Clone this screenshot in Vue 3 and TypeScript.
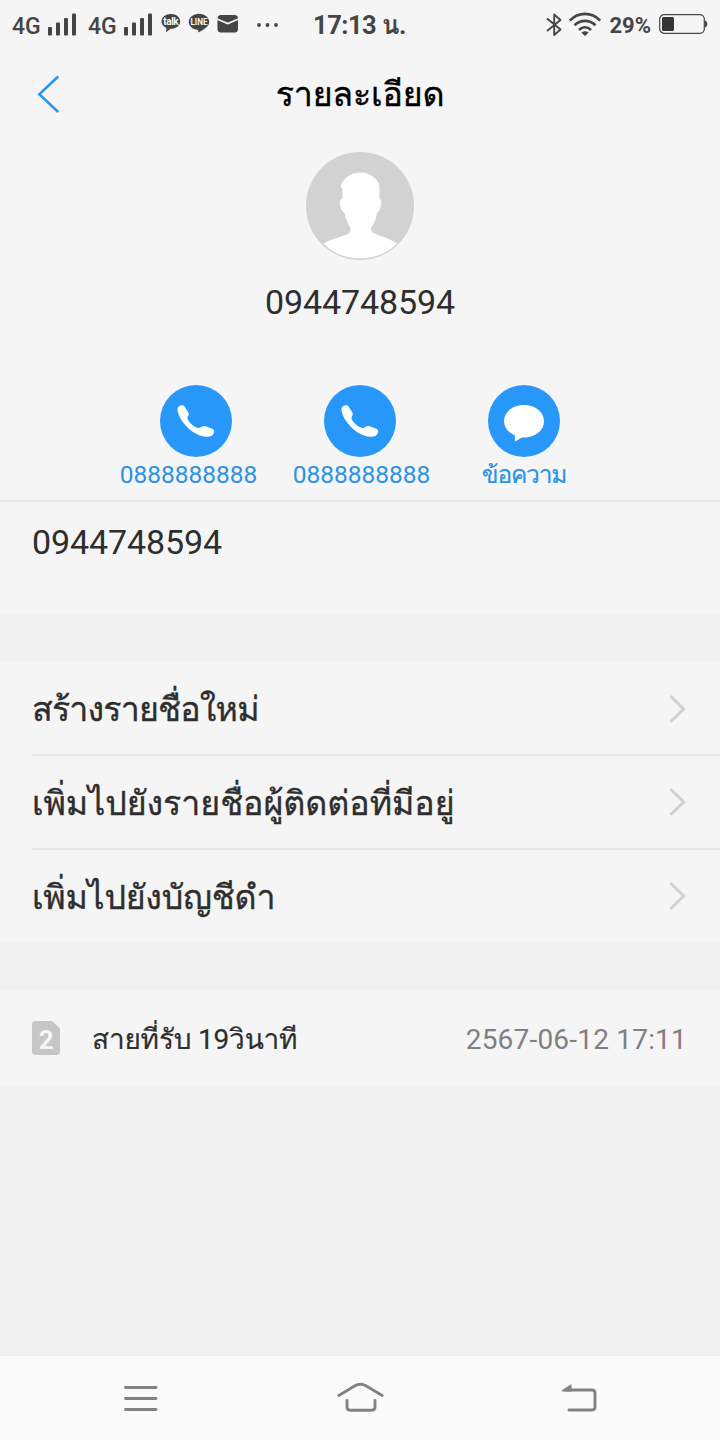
<script setup lang="ts">
interface Action {
  kind: 'call' | 'message'
  label: string
}

const phone = '0944748594'
const actions: Action[] = [
  { kind: 'call', label: '0888888888' },
  { kind: 'call', label: '0888888888' },
  { kind: 'message', label: 'ข้อความ' },
]
const options: { id: string; label: string }[] = [
  { id: 'create', label: 'สร้างรายชื่อใหม่' },
  { id: 'existing', label: 'เพิ่มไปยังรายชื่อผู้ติดต่อที่มีอยู่' },
  { id: 'block', label: 'เพิ่มไปยังบัญชีดำ' },
]
</script>

<template>
  <div class="screen">
    <div class="status">
      <template v-for="sim in 2" :key="sim">
        <span class="net">4G</span>
        <svg class="signal" width="29" height="24" viewBox="0 0 29 24" fill="#454545">
          <rect x="0" y="14" width="4" height="8.5" rx="1" />
          <rect x="8" y="9.500" width="4" height="13" rx="1" />
          <rect x="16" y="5" width="4" height="17.500" rx="1" />
          <rect x="24" y="0.500" width="4" height="22" rx="1" />
        </svg>
      </template>
      <svg class="talk" width="20" height="20" viewBox="0 0 20 20">
        <path d="M10 1C4.500 1 .5 4.200 .5 8.400c0 2.900 1.900 5.200 4.900 6.500L5 19.300l4.700-3.600c5.600 0 9.500-3.200 9.500-7.300S15.300 1 10 1z" fill="#454545" />
        <text x="2.300" y="12" class="talk-text">talk</text>
      </svg>
      <svg class="line-app" width="22" height="20" viewBox="0 0 22 20">
        <path d="M11 .8C5.200 .8 .8 4.400 .8 9c0 4.100 3.600 7.200 8.700 7.800 1.400.2.700 2 .9 2.700C15 17 21.200 13.500 21.200 9 21.200 4.400 16.800 .8 11 .8z" fill="#454545" />
        <text x="11" y="12.300" text-anchor="middle" textLength="17" lengthAdjust="spacingAndGlyphs" class="line-text">LINE</text>
      </svg>
      <svg class="mail" width="22" height="20" viewBox="0 0 22 20">
        <rect x="0.500" y="1" width="20.500" height="17.500" rx="3.500" fill="#454545" />
        <path d="M0 5l10.700 4.600L21.500 5" fill="none" stroke="#f5f5f5" stroke-width="1.600" />
      </svg>
      <svg class="dots" width="24" height="6" viewBox="0 0 24 6" fill="#454545">
        <circle cx="3" cy="3" r="1.900" /><circle cx="11.500" cy="3" r="1.900" /><circle cx="20" cy="3" r="1.900" />
      </svg>
      <span class="time">17:13 น.</span>
      <div class="status-right">
        <svg width="18" height="26" viewBox="0 0 18 26" fill="none" stroke="#454545" stroke-width="1.900">
          <path d="M1 6.500L14.500 17.500 8.200 23V2.500L14.500 8 1 19" stroke-linejoin="round" />
        </svg>
        <svg class="wifi" width="34" height="25" viewBox="0 0 34 25" fill="none" stroke="#454545" stroke-width="2.700">
          <path d="M1.800 8.600C10.500-.3 23.500-.3 32.200 8.600" />
          <path d="M6.500 13.300c6-5.900 15-5.900 21 0" />
          <path d="M11 17.900c3.600-3.300 8.400-3.300 12 0" />
          <path d="M13.500 20.700c1.600-2 5.400-2 7 0L17 24z" fill="#454545" stroke="none" />
        </svg>
        <span class="percent">29%</span>
        <svg class="battery" width="49" height="20" viewBox="0 0 49 20">
          <rect x="0.700" y="0.700" width="44.600" height="18.600" rx="4.500" fill="none" stroke="#454545" stroke-width="1.200" />
          <rect x="3" y="3" width="12" height="14" rx="1.500" fill="#353535" />
          <path d="M46 6.500c3 .8 3 6.200 0 7z" fill="#454545" />
        </svg>
      </div>
    </div>

    <header class="header">
      <svg class="back" width="24" height="40" viewBox="0 0 24 40" fill="none" stroke="#2e96ea" stroke-width="2.600">
        <path d="M22.200 1.500L3.300 19.300l18.900 17.700" />
      </svg>
      <h1 class="title">รายละเอียด</h1>
    </header>

    <section class="profile">
      <svg class="avatar" width="108" height="108" viewBox="0 0 108 108">
        <circle cx="54" cy="54" r="54" fill="#d2d2d2" />
        <path d="M54 20.500c-7 0-13 3.500-16.500 8.500-2 2.500-3 4.500-2.500 6l1.500 2v9.500c-3 1-3 4-2.500 6.500.7 4 2 6.500 4.500 8 1 6 3.500 10.500 5.500 14 .8 3 .2 5.500-2 7-8 3.500-17 5-24.500 9.500C27 101.500 40 106.300 54 106.300S81 101.500 91 91.500C82.500 86 74 84 67.500 81c-2-1-2.800-3-2-6 3-3.500 4.500-8 5.500-14 2.500-1.500 3.500-4.500 4-8 .5-2.500.3-5.500-1.500-6.500V35c0-7-9-14.500-19.500-14.500z" fill="#fff" />
      </svg>
      <div class="number">{{ phone }}</div>
      <div class="actions">
        <div v-for="(a, i) in actions" :key="i" class="action">
          <svg class="action-icon" width="72" height="72" viewBox="0 0 72 72">
            <circle cx="36" cy="36" r="36" fill="#2798f9" />
            <path v-if="a.kind === 'call'" d="M19 21.300c1.800-1.600 4.300-1.600 5.500.3l3.700 5.600c1 1.600.6 2.900-.3 4.200-.8 1.300-.5 2.500.3 3.800 2.200 3.600 5.700 6.500 9.300 7.600 1.200.5 2.300.2 3.400-.5 1.500-1.100 3-1.500 4.700-1l6 2.200c2.500 1 3.100 2.600 2.200 4.800-1.100 2.600-3.700 3.800-7.200 3.500-7.600-.6-15-4.800-20.300-10.600-4.500-4.900-7.900-10.200-8.700-14.900-.4-2.200-.3-3.500 1.400-5z" fill="#fff" />
            <path v-else d="M36 20c-11.500 0-20 7-20 16.300 0 6 4 11.200 10.700 14L27 56.500l7-4c12.500.8 22-6.500 22-16.200C56 27 47.500 20 36 20z" fill="#fff" />
          </svg>
          <span class="action-label" :class="a.kind">{{ a.label }}</span>
        </div>
      </div>
    </section>

    <section class="phone-row">{{ phone }}</section>

    <section class="options">
      <div v-for="o in options" :key="o.id" class="option">
        <span class="option-label" :class="o.id">{{ o.label }}</span>
        <svg width="18" height="30" viewBox="0 0 18 30" fill="none" stroke="#d2d2d2" stroke-width="3">
          <path d="M1.500 2.200L14.700 15 1.500 27.800" />
        </svg>
      </div>
    </section>

    <section class="log">
      <svg width="28" height="34" viewBox="0 0 28 34">
        <path d="M3.500 0H20l8 7.500v23a3.500 3.500 0 0 1-3.500 3.500h-21A3.500 3.500 0 0 1 0 30.500v-27A3.500 3.500 0 0 1 3.500 0z" fill="#c6c6c6" />
        <text x="14.200" y="27.500" text-anchor="middle" class="sim-text">2</text>
      </svg>
      <span class="log-label">สายที่รับ 19วินาที</span>
      <span class="log-date">2567-06-12 17:11</span>
    </section>

    <nav class="nav">
      <svg width="34" height="28" viewBox="0 0 34 28" stroke="#828282" stroke-width="2.900" stroke-linecap="round">
        <path d="M1.500 3.500h30.500M1.500 14.500h30.500M1.500 25.500h30.500" />
      </svg>
      <svg width="50" height="32" viewBox="0 0 50 32" fill="none" stroke="#828282" stroke-width="2.900" stroke-linecap="round">
        <path d="M3.800 13.500L20 3.800q5.500-3 11 0l16.200 9.700" />
        <path d="M12 18.500v6.500q0 3.200 3.200 3.200h21.600q3.200 0 3.200-3.200v-6.500" />
      </svg>
      <svg width="36" height="30" viewBox="0 0 36 30" fill="none" stroke="#828282" stroke-width="2.900" stroke-linecap="round">
        <path d="M4.500 7h26.500q3 0 3 3v14q0 3-3 3H8" />
        <path d="M.8 7.300L10.500 1v7.400H1z" fill="#828282" stroke="none" />
      </svg>
    </nav>
  </div>
</template>

<style>
html, body { margin: 0; background: #f0f0f0; }
</style>

<style scoped>
.screen {
  width: 720px;
  height: 1440px;
  display: flex;
  flex-direction: column;
  overflow: hidden;
  background: #f0f0f0;
  color: #2e2e2e;
  font-family: Roboto, Loma, "Noto Sans Thai", "Noto Sans", sans-serif;
}
svg { display: block; flex: none; overflow: visible; }
.status {
  height: 50px;
  flex: none;
  display: flex;
  align-items: center;
  padding-left: 12px;
  background: #f5f5f5;
  color: #454545;
  white-space: nowrap;
}
.net { width: 36px; font-size: 23px; font-weight: 500; line-height: 30px; padding-top: 4px; box-sizing: border-box; }
.signal { margin-right: 11px; }
.talk { margin: -4px 8px 0 -3px; }
.line-app { margin: -4px 8px 0 -1px; }
.mail { margin: -3px 17px 0 -1px; }
.talk-text { font: 700 10px Roboto, sans-serif; letter-spacing: -0.450px; fill: #f5f5f5; }
.line-text { font: 700 9px Roboto, sans-serif; fill: #f5f5f5; }
.time { margin-left: 33px; font-size: 25.500px; font-weight: 700; line-height: 30px; letter-spacing: -0.500px; }
.status-right { margin-left: auto; padding-right: 12px; display: flex; align-items: center; }
.wifi { margin: -2px 7px 0 4px; }
.percent { font-size: 22px; font-weight: 700; line-height: 30px; margin-right: 8px; padding-top: 2px; }
.battery { margin-top: -2px; }
.header {
  height: 90px;
  flex: none;
  display: grid;
  grid-template-columns: 120px 1fr 120px;
  align-items: center;
  background: #f5f5f5;
}
.back { margin-left: 36px; }
.title {
  margin: 0;
  padding-bottom: 2px;
  text-align: center;
  font-size: 34px;
  font-weight: 400;
  line-height: 50px;
  letter-spacing: -0.200px;
  color: #000;
  -webkit-text-stroke: 0.350px currentColor;
}
.profile {
  height: 360px;
  flex: none;
  display: flex;
  flex-direction: column;
  align-items: center;
  padding-top: 12px;
  box-sizing: border-box;
  background: #f5f5f5;
}
.number { margin-top: 22px; font-size: 34px; line-height: 40px; letter-spacing: -0.100px; }
.actions { display: flex; margin-top: 63px; }
.action { width: 164px; display: flex; flex-direction: column; align-items: center; }
.action-label { margin-top: 3px; font-size: 24.500px; line-height: 30px; color: #2b93e2; white-space: nowrap; }
.action-label.message { letter-spacing: -1.200px; -webkit-text-stroke: 0.200px currentColor; }
.action:nth-child(1) .action-label { margin-left: -15px; }
.action:nth-child(2) .action-label { margin-left: 3px; }
.phone-row {
  height: 113px;
  flex: none;
  box-sizing: border-box;
  border-top: 2px solid #e6e6e6;
  padding: 20px 32px 0;
  font-size: 34px;
  line-height: 40px;
  letter-spacing: -0.100px;
  background: #f5f5f5;
}
.options { margin-top: 48px; height: 280px; flex: none; background: #f5f5f5; }
.option {
  height: 94px;
  margin-left: 32px;
  padding-right: 33px;
  box-sizing: border-box;
  display: flex;
  align-items: center;
  justify-content: space-between;
  border-top: 2px solid #e6e6e6;
}
.option:first-child { border-top-color: transparent; height: 93px; }
.option-label { font-size: 34px; line-height: 60px; padding-top: 1px; white-space: nowrap; -webkit-text-stroke: 0.350px currentColor; }
.option-label.create { letter-spacing: -0.850px; }
.option-label.existing { letter-spacing: -0.080px; }
.option-label.block { letter-spacing: -0.280px; }
.log {
  margin-top: 49px;
  height: 95px;
  flex: none;
  display: flex;
  align-items: center;
  padding: 0 33px 0 32px;
  background: #f5f5f5;
}
.sim-text { font: 700 26px Roboto, sans-serif; fill: #f5f5f5; }
.log-label { margin-left: 32px; padding-top: 4px; font-size: 28px; line-height: 40px; white-space: nowrap; letter-spacing: -0.200px; -webkit-text-stroke: 0.200px currentColor; }
.log-date { margin-left: auto; padding-top: 4px; font-size: 28px; line-height: 40px; color: #808080; letter-spacing: 0.200px; }
.nav {
  margin-top: auto;
  height: 84px;
  flex: none;
  display: flex;
  align-items: center;
  justify-content: space-between;
  padding: 0 123px 0 124px;
  box-sizing: border-box;
  background: #fafafa;
}
</style>
